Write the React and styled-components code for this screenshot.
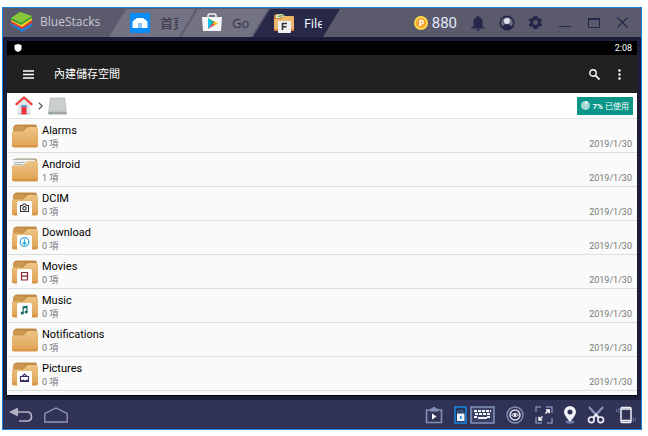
import React from "react";
import styled, { createGlobalStyle } from "styled-components";

const GlobalStyle = createGlobalStyle`
  * {
    box-sizing: border-box;
  }

  body {
    margin: 0;
    background: #fff;
    font-family: Roboto, "Noto Sans CJK TC", sans-serif;
  }

  button {
    display: flex;
    align-items: center;
    justify-content: center;
    padding: 0;
    border: 0;
    background: none;
    font: inherit;
    color: inherit;
    cursor: pointer;
  }

  a {
    color: inherit;
    text-decoration: none;
  }

  svg {
    display: block;
    flex: none;
  }
`;

const Window = styled.div`
  margin: 7px 6px 6px 2px;
  border: 1px solid #1583dd;
  background: #1c1d38;
`;

/* title bar */

const TitleBar = styled.header`
  display: flex;
  align-items: center;
  height: 29px;
  padding: 0 4px 0 7px;
  background: #5b5a6c;
  font-family: "Open Sans", "Noto Sans CJK TC", sans-serif;
`;

const Brand = styled.div`
  display: flex;
  align-items: center;
  gap: 7px;
  width: 99px;
  padding-bottom: 2px;
  color: #c9c9d3;
  font-size: 12px;
`;

const Tabs = styled.nav`
  display: flex;
  align-self: flex-end;
  margin-right: auto;
`;

const Tab = styled.button`
  && {
    justify-content: flex-start;
    gap: 9px;
    width: 87px;
    height: 28px;
    padding-left: 20px;
    background: ${(props) => (props.$active ? "#282949" : "#737283")};
    color: ${(props) => (props.$active ? "#fff" : "#34344c")};
    clip-path: polygon(17px 0, 100% 0, calc(100% - 17px) 100%, 0 100%);
    font-size: 13px;
  }

  & + & {
    margin-left: -15px;
  }
`;

const TabLabel = styled.span`
  width: 18px;
  overflow: hidden;
  line-height: 20px;
  text-align: left;
  white-space: nowrap;
`;

const Coins = styled.div`
  display: flex;
  align-items: center;
  gap: 4px;
  margin-right: 6px;
  color: #e3eafc;
  font-family: Roboto, sans-serif;
  font-size: 15px;
`;

const WindowButton = styled.button`
  width: 29px;
  height: 29px;
  && {
    color: #25264a;
  }
`;

/* android screen */

const Screen = styled.main`
  margin: 4px;
  border-bottom: 1px solid #000;
  background: #fafafa;
`;

const StatusBar = styled.div`
  display: flex;
  align-items: center;
  justify-content: space-between;
  height: 14px;
  padding: 0 5px 0 7px;
  background: #000;
  color: #fff;
  font-size: 9px;
`;

const AppBar = styled.div`
  display: flex;
  align-items: center;
  height: 38px;
  padding: 0 5px 0 9px;
  background: #212121;
  color: #fff;
`;

const AppBarButton = styled.button`
  width: 25px;
  height: 24px;
`;

const AppTitle = styled.h1`
  flex: 1;
  margin: 0 0 0 13px;
  padding-top: 2px;
  font-size: 11px;
  font-weight: 400;
  line-height: 16px;
`;

const Crumbs = styled.div`
  display: flex;
  align-items: center;
  gap: 5px;
  height: 26px;
  padding: 0 4px 0 8px;
  border-bottom: 1px solid #e2e2e2;
  background: #fff;
`;

const UsageButton = styled.button`
  && {
    gap: 3px;
    height: 18px;
    margin-left: auto;
    padding: 0 4px;
    background: #099688;
    color: #fff;
    font-size: 8px;
  }

  strong {
    font-weight: 700;
  }
`;

const FileList = styled.ul`
  margin: 0;
  padding: 0 0 4px;
  list-style: none;
`;

const FileRow = styled.li`
  height: 34px;
  margin-left: 1px;
  border-bottom: 1px solid #dcdcdc;
`;

const FileLink = styled.a`
  display: flex;
  align-items: center;
  gap: 4px;
  height: 100%;
  padding: 0 5px 0 4px;
`;

const FileText = styled.div`
  flex: 1;
  padding-top: 2px;
`;

const FileName = styled.div`
  color: #000;
  font-size: 11px;
  line-height: 14px;
`;

const FileMeta = styled.div`
  align-self: ${(props) => (props.$end ? "flex-end" : "auto")};
  padding-bottom: ${(props) => (props.$end ? "2px" : "0")};
  color: #777;
  font-size: 9px;
  line-height: 12px;
`;

/* bottom bar */

const BottomBar = styled.footer`
  display: flex;
  align-items: center;
  gap: 11px;
  height: 29px;
  padding: 0 5px 0 6px;
  background: #313356;
`;

const Spacer = styled.div`
  flex: 1;
`;

const KeyboardGroup = styled.div`
  display: flex;
  gap: 3px;
`;

const BlueStacksLogo = () => (
  <svg width="23" height="22" viewBox="0 0 23 22">
    <path d="M1 14l11 7 10-6v-3l-10 5-11-5z" fill="#1e7fd6" />
    <path d="M1 12l11 6 10-6v-2l-10 5-11-5z" fill="#e8392f" />
    <path d="M1 10l11 6 10-7V7l-10 5L1 8z" fill="#fbd21f" />
    <path d="M1 7l9-6 12 4v2l-11 7L1 9z" fill="#3c9a3a" />
    <path d="M1 7l9-6 12 4-11 7z" fill="#88c63b" />
  </svg>
);

const HomeTabIcon = () => (
  <svg width="22" height="20" viewBox="0 0 22 20">
    <rect x="1" width="20" height="20" rx="1" fill="#0a8cf8" />
    <path d="M3.500 9q0-1 1-1.600L8 5h6l3.500 2.400q1 .6 1 1.600v6h-15z" fill="#fff" />
    <path d="M9 10h4v5H9z" fill="#8acbfa" />
  </svg>
);

const PlayTabIcon = () => (
  <svg width="22" height="20" viewBox="0 0 22 20">
    <path d="M7 4V2.500q0-1.500 1.500-1.500h5Q15 1 15 2.500V4" fill="none" stroke="#f4f4f4" strokeWidth="1.500" />
    <path d="M1 4h20l-1 14H2z" fill="#f6f6f6" />
    <path d="M7 5v11l6-5.500z" fill="#12c4e8" />
    <path d="M7 5l9 5.500-3 1.800z" fill="#17b877" />
    <path d="M7 16l9-5.500-3-2z" fill="#ef3d4a" />
    <path d="M12 10.500l2-2 3 2-3 2z" fill="#fbc31c" />
  </svg>
);

const FilesTabIcon = () => (
  <svg width="22" height="22" viewBox="0 0 22 22">
    <path d="M1 5q0-3 2-3h6l2 2h9q1 0 1 2v9H1z" fill="#c7873c" />
    <path d="M3 3l6-1 3 2-6 2H3z" fill="#e9f2e2" />
    <path d="M4 4l5-1 2 1-6 1z" fill="#4ea63c" />
    <path d="M1 7h7l3-3h9q1 0 1 2v13H1z" fill="#ecb66c" />
    <path d="M1 17h20v2H1z" fill="#d78535" />
    <rect x="5" y="9" width="13" height="12" rx="1" fill="#f0f0f0" />
    <path d="M9.500 18v-6.500H14M9.500 14.800h4" fill="none" stroke="#333" strokeWidth="1.600" />
  </svg>
);

const CoinIcon = () => (
  <svg width="14" height="14" viewBox="0 0 14 14">
    <circle cx="7" cy="7" r="7" fill="#fbd84d" />
    <circle cx="7" cy="7" r="5" fill="#f5a02c" />
    <path d="M6 10.500V4.500h1.500a1.600 1.600 0 010 3.500H5" fill="none" stroke="#fff" strokeWidth="1.300" />
  </svg>
);

const BellIcon = () => (
  <svg width="14" height="16" viewBox="0 0 14 16" fill="currentColor">
    <path d="M6 1.500a1 1 0 012 0v.7c2.300.5 3.500 2.200 3.500 4.500v4.200L14 13v.5H0V13l2.500-2.100V6.700C2.500 4.400 3.700 2.700 6 2.200z" />
    <path d="M5 14.200h4a2 1.600 0 01-4 0z" />
  </svg>
);

const UserIcon = () => (
  <svg width="16" height="16" viewBox="0 0 16 16">
    <circle cx="8" cy="8" r="6.700" fill="#6f6e80" stroke="currentColor" strokeWidth="1.700" />
    <circle cx="8" cy="6" r="3" fill="#dfe2ef" />
    <path d="M3 12q1.500-3 5-3t5 3q-2 2.500-5 2.500T3 12z" fill="currentColor" />
  </svg>
);

const GearIcon = () => (
  <svg width="17" height="17" viewBox="0 0 24 24" fill="currentColor" fillRule="evenodd">
    <path d="M19.400 13a7.500 7.500 0 000-2l2.100-1.700-2-3.500-2.500 1a7.500 7.500 0 00-1.700-1L14.900 3h-5.800l-.4 2.800a7.500 7.500 0 00-1.700 1l-2.500-1-2 3.500L4.600 11a7.500 7.500 0 000 2l-2.100 1.700 2 3.500 2.500-1a7.500 7.500 0 001.700 1l.4 2.800h5.800l.4-2.800a7.500 7.500 0 001.700-1l2.500 1 2-3.500zM12 15.400a3.400 3.400 0 110-6.800 3.400 3.400 0 010 6.800z" />
  </svg>
);

const MinimizeIcon = () => (
  <svg width="12" height="12" viewBox="0 0 12 12">
    <path d="M0 9.500h12" stroke="currentColor" />
  </svg>
);

const MaximizeIcon = () => (
  <svg width="12" height="10" viewBox="0 0 12 10">
    <path d="M.5 1v8.500h11V1z" fill="none" stroke="currentColor" />
    <path d="M0 1h12" stroke="currentColor" strokeWidth="2" />
  </svg>
);

const CloseIcon = () => (
  <svg width="11" height="11" viewBox="0 0 11 11">
    <path d="M.5.5l10 10m0-10l-10 10" stroke="currentColor" strokeWidth="1.200" />
  </svg>
);

const ShieldIcon = () => (
  <svg width="8" height="8" viewBox="0 0 8 8">
    <path d="M4 0l3.500 1v3.500Q7.500 6.500 4 8 .5 6.500.5 4.500V1z" fill="#fff" />
  </svg>
);

const MenuIcon = () => (
  <svg width="11" height="9" viewBox="0 0 11 9">
    <path d="M0 1h11M0 4.500h11M0 8h11" stroke="#fff" strokeWidth="1.300" />
  </svg>
);

const SearchIcon = () => (
  <svg width="11" height="11" viewBox="0 0 11 11" fill="none" stroke="#fff">
    <circle cx="4" cy="4" r="3.200" strokeWidth="1.400" />
    <path d="M6.500 6.500l4 4" strokeWidth="1.700" />
  </svg>
);

const MoreIcon = () => (
  <svg width="3" height="11" viewBox="0 0 3 11" fill="#fff">
    <circle cx="1.500" cy="1.500" r="1.200" />
    <circle cx="1.500" cy="5.500" r="1.200" />
    <circle cx="1.500" cy="9.500" r="1.200" />
  </svg>
);

const HouseIcon = () => (
  <svg width="18" height="19" viewBox="0 0 18 19">
    <path d="M3 8l6-5 6 5v10H3z" fill="#e2e8ea" />
    <path d="M3 17h12v1.500H3z" fill="#bfc9cd" />
    <path d="M.7 8.800L9 1.500l8.300 7.300" fill="none" stroke="#f0413f" strokeWidth="2.200" />
    <path d="M6.500 9h5v9.500h-5z" fill="#f0343a" />
    <path d="M6.500 9h5v2h-5z" fill="#43a5dd" />
  </svg>
);

const ChevronIcon = () => (
  <svg width="5" height="8" viewBox="0 0 5 8">
    <path d="M.8.700L4.200 4 .8 7.300" fill="none" stroke="#555" strokeWidth="1.200" />
  </svg>
);

const DriveIcon = () => (
  <svg width="19" height="18" viewBox="0 0 19 18">
    <path d="M2 .5h15l1.800 14.500H.2z" fill="#c0c3c4" />
    <path d="M3 1.500h13l1.300 12H1.700z" fill="#cbcecf" />
    <path d="M.2 15h18.600v2.500H.2z" fill="#a4a7a8" />
    <path d="M2 16h2" stroke="#62b54a" />
  </svg>
);

const PieIcon = () => (
  <svg width="9" height="9" viewBox="0 0 9 9">
    <circle cx="4.500" cy="4.500" r="4.500" fill="#a3d8d2" />
    <path d="M4.500 4.500V0a4.500 4.500 0 012.200.6z" fill="#fff" />
  </svg>
);

const badges = {
  camera: (
    <g fill="none" stroke="#333" strokeWidth="1.100">
      <path d="M8.500 13.500h2l1-1.500h2l1 1.500h2v6h-8z" />
      <circle cx="12.500" cy="16.300" r="1.700" />
    </g>
  ),
  download: (
    <g fill="none" stroke="#2fa9dc" strokeWidth="1.200">
      <circle cx="12.500" cy="16" r="4.300" />
      <path d="M12.500 13.200v5M10.700 16.500l1.800 2 1.800-2" />
    </g>
  ),
  film: (
    <path d="M9.500 12v8.500M15.500 12v8.500M9 12.500h7M9 16.200h7M9 20h7" fill="none" stroke="#8b2635" strokeWidth="1.200" />
  ),
  music: (
    <g fill="#176a64">
      <path d="M10.500 19v-6.500l5-1V18h-1.200v-4l-2.600.6V19z" />
      <circle cx="10.300" cy="19" r="1.600" />
      <circle cx="14.200" cy="18" r="1.600" />
    </g>
  ),
  picture: (
    <g fill="none" stroke="#3b2a66" strokeWidth="1.100">
      <path d="M8.500 14.500h8v5h-8zM10 14.500l2.500-2.500 2.500 2.500" />
      <path d="M9 19l2-1 2 1 3-1v1.500H9z" fill="#3b2a66" />
    </g>
  ),
};

const FolderIcon = ({ badge, filled }) => (
  <svg width="26" height="24" viewBox="0 0 26 24">
    <defs>
      <linearGradient id="folderFront" x1="0" y1="0" x2="0" y2="1">
        <stop offset="0" stopColor="#edc486" />
        <stop offset="1" stopColor="#dfa252" />
      </linearGradient>
    </defs>
    <path d="M1 20V5q0-2 1-3 1-1.500 2-1.500h19q2 0 2 2V20z" fill="#c18b45" />
    <path d="M3 2h8l2 2-6 4H1V5z" fill="#cd9850" />
    {filled && (
      <g>
        <path d="M1 2h22l1 2v4H1z" fill="#f1f3f4" />
        <path d="M1 1.500h22M2 4.500h11M2 6.500h9" stroke="#a9b6bc" />
      </g>
    )}
    <path d="M0 8.500q0-1 1-1h9q1 0 2-1l2.500-2.500q1-1 2-1H24q2 0 2 2v16q0 2-2 2H2q-2 0-2-2z" fill="url(#folderFront)" />
    <path d="M0 21h26q0 2.500-2 2.500H2Q0 23.500 0 21z" fill="#d79645" />
    {badge && <rect x="5" y="9" width="15" height="15" rx="1.500" fill="#fff" />}
    {badge && badges[badge]}
  </svg>
);

const BackIcon = () => (
  <svg width="24" height="16" viewBox="0 0 24 16">
    <path d="M7 5h11q4.500 0 4.500 4.500T18 14h-8" fill="none" stroke="#b2b4c4" strokeWidth="1.700" />
    <path d="M0 5l9-4.500v9z" fill="#b2b4c4" />
  </svg>
);

const HomeOutlineIcon = () => (
  <svg width="24" height="16" viewBox="0 0 24 16">
    <path d="M.8 15V6.500L12 1l11.200 5.500V15z" fill="none" stroke="#9698ad" strokeWidth="1.300" />
  </svg>
);

const ClipboardIcon = () => (
  <svg width="18" height="18" viewBox="0 0 18 18">
    <path d="M1.500 4h15v12.500h-15z" fill="none" stroke="#8290b5" strokeWidth="1.600" />
    <path d="M5 5.500V2.500h2L8 1h2l1 1.500h2v3z" fill="#8290b5" />
    <path d="M7 7.500v6l4.500-3z" fill="#fff" />
  </svg>
);

const LockIcon = () => (
  <svg width="13" height="18" viewBox="0 0 13 18">
    <path d="M1 1h11v16H1z" fill="#25375f" stroke="#1887df" strokeWidth="1.500" />
    <path d="M4 7V5h5v2" fill="none" stroke="#526890" />
    <path d="M3 7.500h7.500v7.500H3z" fill="#f0f3fb" />
    <path d="M6 10h1.500v3H6z" fill="#1887df" />
  </svg>
);

const KeyboardIcon = () => (
  <svg width="25" height="18" viewBox="0 0 25 18">
    <path d="M1 1h23v16H1z" fill="#3c4167" stroke="#8495ba" strokeWidth="1.500" />
    <path d="M4 5h17M5 8h16M4 11h4M17 11h4" stroke="#f2f4fa" strokeWidth="2" strokeDasharray="3 1" />
    <path d="M8 12h9" stroke="#f2f4fa" strokeWidth="2" />
  </svg>
);

const EyeIcon = () => (
  <svg width="18" height="18" viewBox="0 0 18 18" fill="none">
    <circle cx="9" cy="9" r="8" stroke="#8492b8" strokeWidth="1.400" />
    <circle cx="9" cy="9" r="5" stroke="#dce0ee" strokeWidth="1.500" />
    <path d="M5.500 9Q9 5.500 12.500 9 9 12.500 5.500 9z" stroke="#dce0ee" />
    <circle cx="9" cy="9" r="1.300" fill="#fff" />
  </svg>
);

const ExpandIcon = () => (
  <svg width="18" height="18" viewBox="0 0 18 18" fill="none">
    <path d="M1 6V1h5M12 17h5v-5" stroke="#7888b0" strokeWidth="1.500" />
    <path d="M11 1h6v6M1 11v6h6" stroke="#7888b0" strokeWidth="1.500" />
    <path d="M10.500 7.500L14 4M11 4h3.200v3.200M7.500 10.500L4 14M4 10.800V14h3.200" stroke="#fff" strokeWidth="1.500" />
  </svg>
);

const PinIcon = () => (
  <svg width="12" height="18" viewBox="0 0 12 18">
    <ellipse cx="6" cy="16" rx="4.500" ry="1.700" fill="#6979a2" />
    <path d="M6 0a6 6 0 016 6q0 3-6 10Q0 9 0 6a6 6 0 016-6zm0 3.500a2.500 2.500 0 100 5 2.500 2.500 0 000-5z" fill="#f0f2f8" fillRule="evenodd" />
  </svg>
);

const ScissorsIcon = () => (
  <svg width="18" height="18" viewBox="0 0 18 18" fill="none">
    <path d="M2 1l10 11" stroke="#8796b9" strokeWidth="2.200" />
    <path d="M16 1L6 12" stroke="#8796b9" strokeWidth="2.200" />
    <path d="M6.500 11.500l2.500-3 2.500 3" stroke="#e8ebf4" strokeWidth="2" />
    <circle cx="4.300" cy="13.800" r="2.800" stroke="#e8ebf4" strokeWidth="1.700" />
    <circle cx="13.700" cy="13.800" r="2.800" stroke="#e8ebf4" strokeWidth="1.700" />
  </svg>
);

const ShakeIcon = () => (
  <svg width="20" height="18" viewBox="0 0 20 18" fill="none">
    <rect x="5" y="1.500" width="10" height="15" rx="1" stroke="#eef0f8" strokeWidth="1.500" />
    <path d="M5 3h10M5 14.700h10" stroke="#eef0f8" strokeWidth="1.700" />
    <path d="M2.800 2v5M.7 3v3M17.200 11v5M19.300 12v3" stroke="#6675a0" />
  </svg>
);

const tabs = [
  { label: "首頁", icon: <HomeTabIcon /> },
  { label: "Go", icon: <PlayTabIcon /> },
  { label: "File", icon: <FilesTabIcon />, active: true },
];

const windowButtons = [
  ["Notifications", BellIcon],
  ["Account", UserIcon],
  ["Settings", GearIcon],
  ["Minimize", MinimizeIcon],
  ["Maximize", MaximizeIcon],
  ["Close", CloseIcon],
];

const files = [
  { name: "Alarms", count: 0 },
  { name: "Android", count: 1, filled: true },
  { name: "DCIM", count: 0, badge: "camera" },
  { name: "Download", count: 0, badge: "download" },
  { name: "Movies", count: 0, badge: "film" },
  { name: "Music", count: 0, badge: "music" },
  { name: "Notifications", count: 0 },
  { name: "Pictures", count: 0, badge: "picture" },
];

export default function App() {
  return (
    <>
      <GlobalStyle />
      <Window>
        <TitleBar>
          <Brand>
            <BlueStacksLogo />
            <span>BlueStacks</span>
          </Brand>
          <Tabs>
            {tabs.map((tab) => (
              <Tab key={tab.label} $active={tab.active}>
                {tab.icon}
                <TabLabel>{tab.label}</TabLabel>
              </Tab>
            ))}
          </Tabs>
          <Coins>
            <CoinIcon />
            <span>880</span>
          </Coins>
          {windowButtons.map(([label, Icon]) => (
            <WindowButton key={label} aria-label={label}>
              <Icon />
            </WindowButton>
          ))}
        </TitleBar>

        <Screen>
          <StatusBar>
            <ShieldIcon />
            <span>2:08</span>
          </StatusBar>
          <AppBar>
            <AppBarButton aria-label="Menu"><MenuIcon /></AppBarButton>
            <AppTitle>內建儲存空間</AppTitle>
            <AppBarButton aria-label="Search"><SearchIcon /></AppBarButton>
            <AppBarButton aria-label="More"><MoreIcon /></AppBarButton>
          </AppBar>
          <Crumbs>
            <a href="#home" aria-label="Home"><HouseIcon /></a>
            <ChevronIcon />
            <a href="#storage" aria-label="Storage"><DriveIcon /></a>
            <UsageButton>
              <PieIcon />
              <span><strong>7%</strong> 已使用</span>
            </UsageButton>
          </Crumbs>
          <FileList>
            {files.map((file) => (
              <FileRow key={file.name}>
                <FileLink href={`#${file.name}`}>
                  <FolderIcon badge={file.badge} filled={file.filled} />
                  <FileText>
                    <FileName>{file.name}</FileName>
                    <FileMeta>{file.count} 項</FileMeta>
                  </FileText>
                  <FileMeta $end>2019/1/30</FileMeta>
                </FileLink>
              </FileRow>
            ))}
          </FileList>
        </Screen>

        <BottomBar>
          <button aria-label="Back"><BackIcon /></button>
          <button aria-label="Home screen"><HomeOutlineIcon /></button>
          <Spacer />
          <button aria-label="Macros"><ClipboardIcon /></button>
          <KeyboardGroup>
            <button aria-label="Lock controls"><LockIcon /></button>
            <button aria-label="Keyboard controls"><KeyboardIcon /></button>
          </KeyboardGroup>
          <button aria-label="Show controls"><EyeIcon /></button>
          <button aria-label="Full screen"><ExpandIcon /></button>
          <button aria-label="Location"><PinIcon /></button>
          <button aria-label="Screenshot"><ScissorsIcon /></button>
          <button aria-label="Shake"><ShakeIcon /></button>
        </BottomBar>
      </Window>
    </>
  );
}
